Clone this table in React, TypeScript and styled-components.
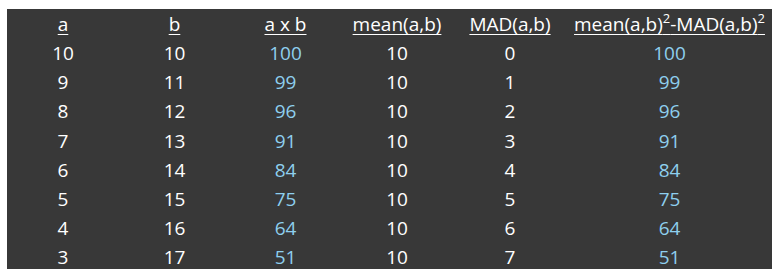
import React from 'react';
import styled, { createGlobalStyle } from 'styled-components';

const GlobalStyle = createGlobalStyle`
  body {
    margin: 0;
    background: #ffffff;
  }
`;

const Page = styled.div`
  padding: 9px 5px 0 7px;
`;

const Table = styled.div`
  width: 765px;
  height: 260px;
  background: #383838;
  display: grid;
  grid-template-columns: 112px 111px 111px 112px 114px 205px;
  grid-template-rows: 30px;
  grid-auto-rows: 29.15px;
  align-items: center;
  padding-top: 0;
  box-sizing: border-box;
  font-family: 'Open Sans', 'Noto Sans', sans-serif;
  font-size: 19px;
  line-height: 1.2;
  color: #ffffff;
`;

const Head = styled.div`
  text-align: center;
  text-decoration: underline;
  text-decoration-thickness: 1px;
  text-underline-offset: 3px;
  white-space: nowrap;
`;

const Cell = styled.div<{ $blue?: boolean }>`
  text-align: center;
  color: ${(p) => (p.$blue ? '#8ecfee' : '#ffffff')};
`;

const Sup = styled.sup`
  font-size: 13px;
  vertical-align: 8px;
  line-height: 0;
`;

const rows = [0, 1, 2, 3, 4, 5, 6, 7].map((d) => ({
  a: 10 - d,
  b: 10 + d,
  prod: (10 - d) * (10 + d),
  mean: 10,
  mad: d,
}));

const App: React.FC = () => (
  <Page>
    <GlobalStyle />
    <Table>
      <Head>a</Head>
      <Head>b</Head>
      <Head>a x b</Head>
      <Head>mean(a,b)</Head>
      <Head>MAD(a,b)</Head>
      <Head>
        mean(a,b)<Sup>2</Sup>-MAD(a,b)<Sup>2</Sup>
      </Head>
      {rows.map((r) => (
        <React.Fragment key={r.a}>
          <Cell>{r.a}</Cell>
          <Cell>{r.b}</Cell>
          <Cell $blue>{r.prod}</Cell>
          <Cell>{r.mean}</Cell>
          <Cell>{r.mad}</Cell>
          <Cell $blue>{r.prod}</Cell>
        </React.Fragment>
      ))}
    </Table>
  </Page>
);

export default App;
